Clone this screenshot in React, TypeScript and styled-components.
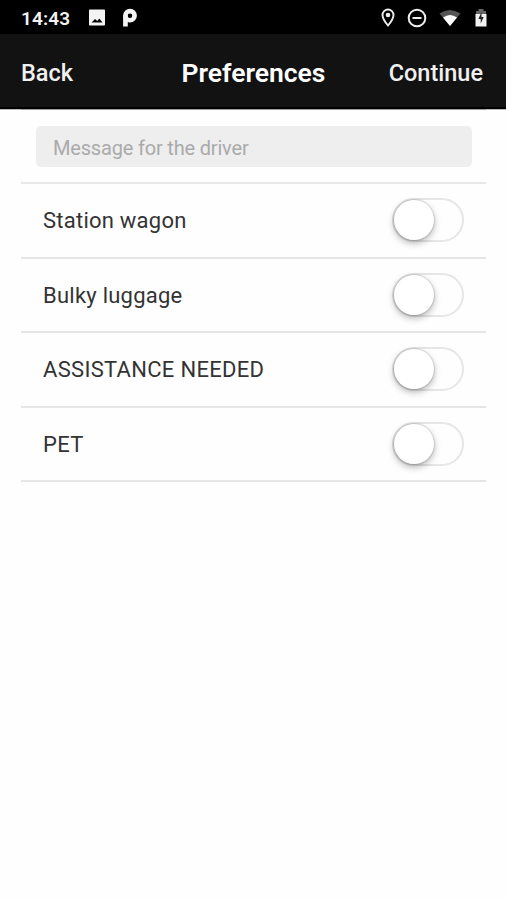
import React from 'react';
import styled, { createGlobalStyle } from 'styled-components';

const GlobalStyle = createGlobalStyle`
  * { box-sizing: border-box; }
  body { margin: 0; background: #fefefe; font-family: Roboto, "Liberation Sans", sans-serif; }
`;

const Screen = styled.div`
  display: flex;
  flex-direction: column;
  height: 900px;
  background: #fefefe;
  overflow: hidden;
`;

const StatusBar = styled.div`
  display: flex;
  align-items: center;
  justify-content: space-between;
  height: 34px;
  padding: 1px 19px 0 21px;
  background: #000;
  color: #f2f2f2;
`;

const StatusGroup = styled.div<{ $gap: number }>`
  display: flex;
  align-items: center;
  gap: ${(p) => p.$gap}px;
`;

const Clock = styled.span`
  width: 67px;
  padding-top: 1px;
  font-size: 19px;
  font-weight: 600;
  letter-spacing: 0.15px;
`;

const Header = styled.header`
  display: grid;
  grid-template-columns: 1fr auto 1fr;
  align-items: center;
  height: 75px;
  padding: 3px 22px 0 21px;
  background: #121212;
  border-bottom: 2px solid #000;
  box-shadow: 0 1px 0 #bbb;
`;

const HeaderButton = styled.button<{ $end?: boolean }>`
  justify-self: ${(p) => (p.$end ? 'end' : 'start')};
  padding: ${(p) => (p.$end ? '2px 1px 0 0' : '2px 0 0')};
  border: 0;
  background: none;
  color: #f0f0f0;
  font: 500 23.5px/28px Roboto, "Liberation Sans", sans-serif;
`;

const Title = styled.h1`
  margin: 0;
  padding: 2px 0 0 2px;
  color: #fff;
  font-size: 26.5px;
  line-height: 30px;
  font-weight: 600;
`;

const Content = styled.main`
  margin: 0 20px 0 21px;
  border-top: 1px solid #999;
`;

const MessageRow = styled.div`
  height: 74px;
  padding: 16px 14px 0 15px;
  border-bottom: 2px solid #e8e8e8;
`;

const MessageInput = styled.input`
  display: block;
  width: 100%;
  height: 41px;
  padding: 3px 17px 0;
  border: 0;
  border-radius: 5px;
  outline: 0;
  background: #eee;
  color: #333;
  font: 400 20px Roboto, "Liberation Sans", sans-serif;
  letter-spacing: -0.18px;
  &::placeholder { color: #aaa; opacity: 1; }
`;

const OptionRow = styled.div`
  display: flex;
  align-items: center;
  justify-content: space-between;
  height: 74.5px;
  padding: 0 22px;
  border-bottom: 2px solid #e6e6e6;
`;

const Label = styled.span<{ $spacing: number }>`
  color: #333;
  font-size: 22px;
  line-height: 28px;
  padding-top: 2px;
  letter-spacing: ${(p) => p.$spacing}px;
`;

const Track = styled.button`
  width: 72px;
  height: 44px;
  padding: 0;
  border: 2px solid #e6e6e6;
  border-radius: 22px;
  background: #fefefe;
`;

const Knob = styled.span`
  display: block;
  width: 40px;
  height: 40px;
  border-radius: 50%;
  background: #fff;
  box-shadow: 0 0 1px 1px rgba(0, 0, 0, 0.12), 0 3px 7px rgba(0, 0, 0, 0.3);
`;

const options = [
  { label: 'Station wagon', spacing: 0.24 },
  { label: 'Bulky luggage', spacing: 0.24 },
  { label: 'ASSISTANCE NEEDED', spacing: 0.3 },
  { label: 'PET', spacing: 0.35 },
];

const PictureIcon = () => (
  <svg width="18" height="18" viewBox="0 0 18 18">
    <path fill="#f4f4f4" fillRule="evenodd" d="M2 .5h14q1 0 1 1v14q0 1-1 1H2q-1 0-1-1v-14q0-1 1-1zM3.500 13.500h11L11.300 9.500l-2 2.500L7 10z" />
  </svg>
);

const ParkingIcon = () => (
  <svg width="16" height="20" viewBox="0 0 16 20">
    <circle cx="8" cy="7.700" r="4.600" fill="none" stroke="#f4f4f4" strokeWidth="4.600" />
    <path fill="#f4f4f4" d="M1.100 7.500h4.700v11H1.100z" />
  </svg>
);

const PinIcon = () => (
  <svg width="14" height="20" viewBox="0 0 14 20">
    <path fill="none" stroke="#eee" strokeWidth="1.900" d="M7 1.500A5.500 5.500 0 0 0 1.500 7c0 4.200 5.500 10.500 5.500 10.500S12.500 11.200 12.500 7A5.500 5.500 0 0 0 7 1.500z" />
    <circle cx="7" cy="7" r="2.300" fill="#eee" />
  </svg>
);

const DoNotDisturbIcon = () => (
  <svg width="20" height="20" viewBox="0 0 20 20" fill="none" stroke="#eee">
    <circle cx="10" cy="10" r="8.300" strokeWidth="2" />
    <path d="M5.500 10h9" strokeWidth="2" />
  </svg>
);

const WifiIcon = () => (
  <svg width="22" height="18" viewBox="0 0 22 18">
    <path fill="#555" d="M.5 4.500Q11-2.500 21.500 4.500L11 17z" />
    <path fill="#fff" d="M4 8.500Q11 3.500 18 8.500L11 17z" />
  </svg>
);

const BatteryIcon = () => (
  <svg width="12" height="20" viewBox="0 0 12 20">
    <path fill="#666" d="M3.500 1h5v2H11v3H1V3h2.500z" />
    <path fill="#f2f2f2" d="M.5 6h11v12.500H.5z" />
    <path fill="#222" d="M6.500 4L3.400 11h2.300v4.500L8.700 9H6.500z" />
  </svg>
);

export default function App() {
  return (
    <Screen>
      <GlobalStyle />
      <StatusBar>
        <StatusGroup $gap={0}>
          <Clock>14:43</Clock>
          <StatusGroup $gap={16}>
            <PictureIcon />
            <ParkingIcon />
          </StatusGroup>
        </StatusGroup>
        <StatusGroup $gap={12}>
          <PinIcon />
          <DoNotDisturbIcon />
          <StatusGroup $gap={14}>
            <WifiIcon />
            <BatteryIcon />
          </StatusGroup>
        </StatusGroup>
      </StatusBar>
      <Header>
        <HeaderButton>Back</HeaderButton>
        <Title>Preferences</Title>
        <HeaderButton $end>Continue</HeaderButton>
      </Header>
      <Content>
        <MessageRow>
          <MessageInput placeholder="Message for the driver" />
        </MessageRow>
        {options.map((o) => (
          <OptionRow key={o.label}>
            <Label $spacing={o.spacing}>{o.label}</Label>
            <Track type="button" role="switch" aria-checked={false} aria-label={o.label}>
              <Knob />
            </Track>
          </OptionRow>
        ))}
      </Content>
    </Screen>
  );
}
